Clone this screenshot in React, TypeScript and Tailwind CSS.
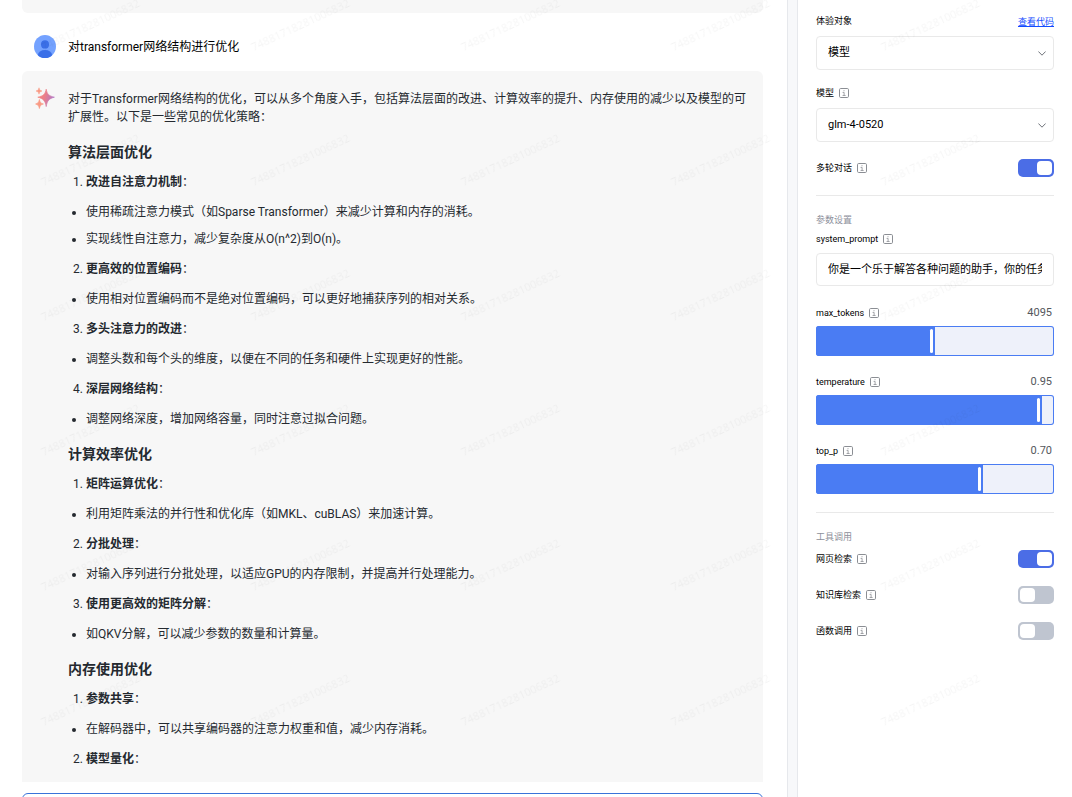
import React, { useState } from 'react';

type Section = {
  title: string;
  items: { title: string; points: string[] }[];
};

const sections: Section[] = [
  {
    title: '算法层面优化',
    items: [
      {
        title: '改进自注意力机制',
        points: [
          '使用稀疏注意力模式（如Sparse Transformer）来减少计算和内存的消耗。',
          '实现线性自注意力，减少复杂度从O(n^2)到O(n)。',
        ],
      },
      { title: '更高效的位置编码', points: ['使用相对位置编码而不是绝对位置编码，可以更好地捕获序列的相对关系。'] },
      { title: '多头注意力的改进', points: ['调整头数和每个头的维度，以便在不同的任务和硬件上实现更好的性能。'] },
      { title: '深层网络结构', points: ['调整网络深度，增加网络容量，同时注意过拟合问题。'] },
    ],
  },
  {
    title: '计算效率优化',
    items: [
      { title: '矩阵运算优化', points: ['利用矩阵乘法的并行性和优化库（如MKL、cuBLAS）来加速计算。'] },
      { title: '分批处理', points: ['对输入序列进行分批处理，以适应GPU的内存限制，并提高并行处理能力。'] },
      { title: '使用更高效的矩阵分解', points: ['如QKV分解，可以减少参数的数量和计算量。'] },
    ],
  },
  {
    title: '内存使用优化',
    items: [
      { title: '参数共享', points: ['在解码器中，可以共享编码器的注意力权重和值，减少内存消耗。'] },
      { title: '模型量化', points: [] },
    ],
  },
];

const UserAvatar: React.FC = () => (
  <svg viewBox="0 0 22 22" className="h-[23px] w-[22px] shrink-0" preserveAspectRatio="none">
    <defs>
      <clipPath id="avatar">
        <circle cx="11" cy="11" r="11" />
      </clipPath>
    </defs>
    <g clipPath="url(#avatar)">
      <rect width="22" height="22" fill="#74a2ff" />
      <circle cx="11" cy="9" r="4" fill="#3a6fe8" />
      <ellipse cx="11" cy="19.2" rx="7" ry="4.8" fill="#3a6fe8" />
    </g>
  </svg>
);

const SparkleIcon: React.FC = () => (
  <svg viewBox="0 0 20 22" className="h-[22px] w-5 shrink-0">
    <defs>
      <linearGradient id="sparkle" x1="0" y1="0" x2="1" y2="0.3">
        <stop offset="0" stopColor="#f9887a" />
        <stop offset="0.5" stopColor="#ea7f8a" />
        <stop offset="1" stopColor="#b478c4" />
      </linearGradient>
    </defs>
    <path d="M11.2 2.2C12.2 7.2 14 9 19.4 10.2C14 11.6 12.2 13.6 11.2 19.6C10.2 13.6 8.2 11.6 2.8 10.2C8.2 9 10.2 7.2 11.2 2.2Z" fill="url(#sparkle)" stroke="url(#sparkle)" strokeWidth="0.7" strokeLinejoin="round" />
    <path d="M4 0.8C4.4 2.8 5.1 3.5 7 4C5.1 4.5 4.4 5.2 4 7.2C3.6 5.2 2.9 4.5 1 4C2.9 3.5 3.6 2.8 4 0.8Z" fill="#f99a84" stroke="#f99a84" strokeWidth="0.5" strokeLinejoin="round" />
    <path d="M4.4 12.5C4.9 15.3 5.8 16.3 8.4 17C5.8 17.7 4.9 18.7 4.4 21.5C3.9 18.7 3 17.7 0.6 17C3 16.3 3.9 15.3 4.4 12.5Z" fill="#f99a84" stroke="#f99a84" strokeWidth="0.7" strokeLinejoin="round" />
  </svg>
);

const InfoIcon: React.FC = () => (
  <svg viewBox="0 0 10 10" className="h-[10px] w-[10px] shrink-0" fill="none" stroke="#8b8e94">
    <rect x="0.5" y="0.5" width="9" height="9" rx="1.2" />
    <path d="M5 2.2v1M3.6 4.4h1.5v3M3.6 7.5h3" strokeWidth="0.8" />
  </svg>
);

const Watermark: React.FC = () => (
  <div
    aria-hidden="true"
    className="pointer-events-none absolute -top-[42px] -left-[15px] grid grid-cols-[repeat(5,210px)] auto-rows-[135px] font-['Noto_Sans'] text-[11px] text-black/4"
  >
    {Array.from({ length: 30 }, (_, i) => (
      <div key={i} className="flex items-center justify-center">
        <span className="-rotate-[25deg] will-change-transform">74881718281006832</span>
      </div>
    ))}
  </div>
);

const FieldLabel: React.FC<{ htmlFor: string; children: React.ReactNode; info?: boolean }> = ({
  htmlFor,
  children,
  info = true,
}) => (
  <div className="flex h-[18px] items-center gap-[5px]">
    <label htmlFor={htmlFor} className="pt-[2px] text-[9px]">
      {children}
    </label>
    {info && <InfoIcon />}
  </div>
);

const SelectBox: React.FC<{ id: string; options: string[] }> = ({ id, options }) => (
  <div className="relative mt-[6px]">
    <select
      id={id}
      className="h-[34px] w-full appearance-none rounded border border-[#e9e9e9] bg-white px-[11px] text-[11px] text-black"
    >
      {options.map((o) => (
        <option key={o}>{o}</option>
      ))}
    </select>
    <svg viewBox="0 0 8 5" className="pointer-events-none absolute top-[15px] right-2 h-[5px] w-2" fill="none" stroke="#6f737a">
      <path d="M0.4 0.5L4 4.2L7.6 0.5" />
    </svg>
  </div>
);

const ToggleRow: React.FC<{ id: string; label: string; defaultChecked?: boolean }> = ({ id, label, defaultChecked }) => (
  <div className="flex items-center justify-between">
    <FieldLabel htmlFor={id}>{label}</FieldLabel>
    <input
      id={id}
      type="checkbox"
      role="switch"
      defaultChecked={defaultChecked}
      className="h-[18px] w-9 appearance-none rounded-[5px] bg-[#bfc5d0] p-[2px] before:block before:h-[14px] before:w-[15px] before:rounded before:bg-white checked:bg-[#4b6de6] checked:before:ml-[17px]"
    />
  </div>
);

const SliderField: React.FC<{ id: string; initial: number; max: number; step: number; digits: number }> = ({
  id,
  initial,
  max,
  step,
  digits,
}) => {
  const [value, setValue] = useState(initial);

  return (
    <div>
      <div className="flex items-center justify-between">
        <FieldLabel htmlFor={id}>{id}</FieldLabel>
        <span className="pr-[2px] text-[11px] leading-[18px] text-[#54575c]">{value.toFixed(digits)}</span>
      </div>
      <div className="relative mt-1 h-[30px] overflow-hidden rounded-[3px] bg-[#eef1fa] ring-1 ring-[#4a7cf3] ring-inset">
        <div
          className="flex h-full items-center justify-end bg-[#4a7cf3] pr-[2px]"
          style={{ width: `${(value / max) * 100}%` }}
        >
          <div className="h-6 w-[3px] rounded-xs bg-white" />
        </div>
        <input
          id={id}
          type="range"
          min={0}
          max={max}
          step={step}
          value={value}
          onChange={(e) => setValue(Number(e.target.value))}
          className="absolute inset-0 h-full w-full cursor-pointer opacity-0"
        />
      </div>
    </div>
  );
};

const Answer: React.FC = () => (
  <div className="min-w-0 flex-1 text-[12px] leading-[18px] text-[#24292f]">
    <p>
      对于Transformer网络结构的优化，可以从多个角度入手，包括算法层面的改进、计算效率的提升、内存使用的减少以及模型的可扩展性。以下是一些常见的优化策略：
    </p>
    {sections.map((section) => (
      <section key={section.title}>
        <h3 className="mt-4 mb-[11px] text-[14px] leading-5 font-bold">{section.title}</h3>
        <div className="flex flex-col gap-3">
          {section.items.map((item, i) => (
            <React.Fragment key={item.title}>
              <ol start={i + 1} className="list-decimal pl-[18px]">
                <li>
                  <strong>{item.title}</strong>：
                </li>
              </ol>
              {item.points.length > 0 && (
                <ul className="flex list-disc flex-col gap-[9px] pl-[18px]">
                  {item.points.map((point) => (
                    <li key={point}>{point}</li>
                  ))}
                </ul>
              )}
            </React.Fragment>
          ))}
        </div>
      </section>
    ))}
  </div>
);

const App: React.FC = () => {
  return (
    <div className="relative flex h-screen overflow-hidden bg-white font-['Roboto','Noto_Sans_CJK_SC',sans-serif] text-black">
      <main className="flex min-w-0 flex-1 flex-col pr-6 pl-[22px]">
        <div className="min-h-0 flex-1 overflow-hidden">
          <div className="h-[13px] rounded-b-md bg-[#f7f7f7]" />
          <div className="flex h-[58px] items-center gap-3 px-3 pt-2">
            <UserAvatar />
            <p className="pt-[2px] text-[12px] leading-[18px]">对transformer网络结构进行优化</p>
          </div>
          <div className="flex gap-3 rounded-md bg-[#f7f7f7] py-[19px] pr-4 pl-[13px]">
            <div className="-mt-[3px] w-[21px] shrink-0">
              <SparkleIcon />
            </div>
            <Answer />
          </div>
        </div>
        <div className="mt-[11px] h-1 overflow-hidden">
          <textarea aria-label="输入消息" className="h-20 w-full resize-none rounded-md border border-[#3a73d9]" />
        </div>
      </main>

      <div className="w-[11px] shrink-0 border-x border-[#e6e8ec] bg-[#f7f8fa]" />

      <aside className="w-[274px] shrink-0 px-[18px] pt-3">
        <div className="flex items-center justify-between">
          <FieldLabel htmlFor="target" info={false}>
            体验对象
          </FieldLabel>
          <a href="#code" className="pt-[3px] text-[9px] text-[#134cff] underline">
            查看代码
          </a>
        </div>
        <SelectBox id="target" options={['模型', '智能体']} />

        <div className="mt-[14px]">
          <FieldLabel htmlFor="model">模型</FieldLabel>
          <SelectBox id="model" options={['glm-4-0520', 'glm-4-air']} />
        </div>

        <div className="mt-[17px]">
          <ToggleRow id="multi-turn" label="多轮对话" defaultChecked />
        </div>

        <hr className="mt-[18px] border-[#e9e9e9]" />

        <h2 className="mt-[15px] text-[9px] leading-[18px] text-[#8d8f9b]">参数设置</h2>
        <div className="mt-px">
          <FieldLabel htmlFor="system_prompt">system_prompt</FieldLabel>
        </div>
        <input
          id="system_prompt"
          type="text"
          defaultValue="你是一个乐于解答各种问题的助手，你的任务是为用户提供专业、准确、有见地的建议。"
          className="mt-[5px] mb-[18px] block h-[33px] w-full rounded border border-[#e9e9e9] px-[11px] pb-[3px] text-[11px]"
        />

        <div className="flex flex-col gap-[17px]">
          <SliderField id="max_tokens" initial={4095} max={8192} step={1} digits={0} />
          <SliderField id="temperature" initial={0.95} max={1} step={0.01} digits={2} />
          <SliderField id="top_p" initial={0.7} max={1} step={0.01} digits={2} />
        </div>

        <hr className="mt-[18px] border-[#e9e9e9]" />

        <h2 className="mt-[15px] text-[9px] leading-[18px] text-[#8d8f9b]">工具调用</h2>
        <div className="mt-1 flex flex-col gap-[18px]">
          <ToggleRow id="web-search" label="网页检索" defaultChecked />
          <ToggleRow id="knowledge" label="知识库检索" />
          <ToggleRow id="function-call" label="函数调用" />
        </div>
      </aside>

      <Watermark />
    </div>
  );
};

export default App;
